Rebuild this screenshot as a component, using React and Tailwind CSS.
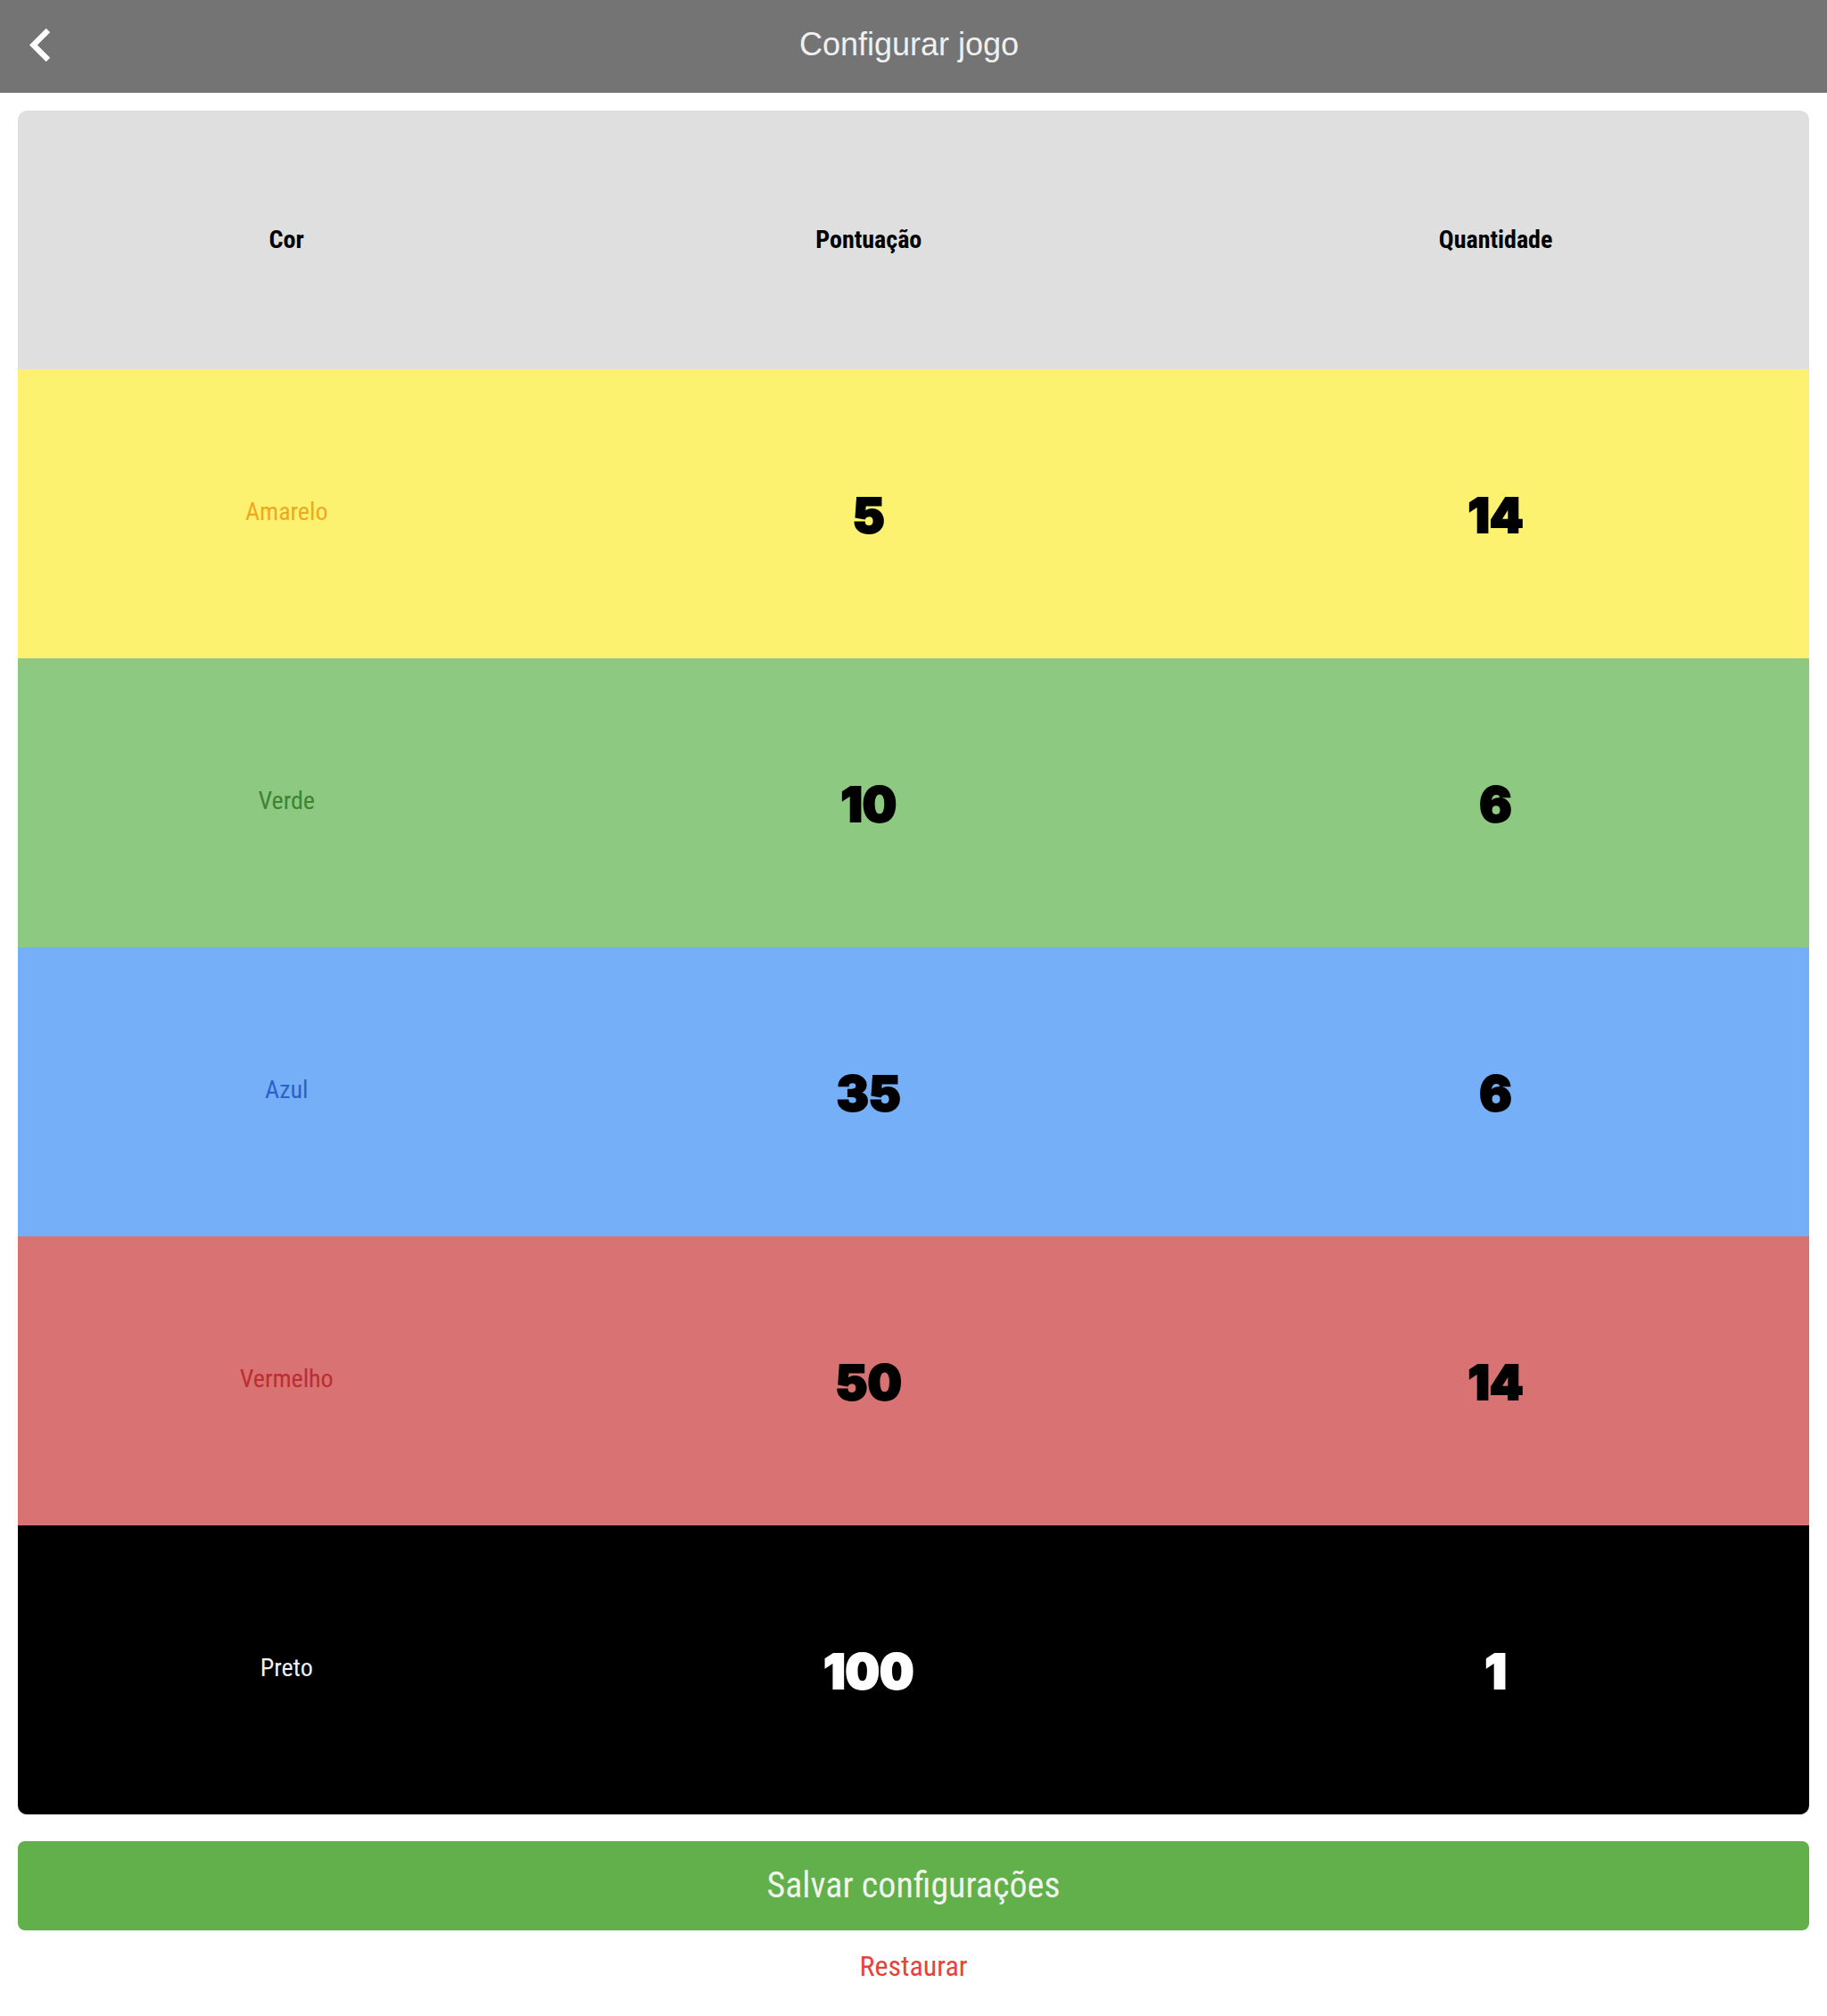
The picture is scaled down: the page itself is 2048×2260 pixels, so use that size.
import { MdChevronLeft } from "react-icons/md";

const rows = [
  { name: "Amarelo", points: 5, amount: 14, bg: "bg-[#fcf26f]", label: "text-[#f0a723]", value: "text-black" },
  { name: "Verde", points: 10, amount: 6, bg: "bg-[#8dc980]", label: "text-[#3f8232]", value: "text-black" },
  { name: "Azul", points: 35, amount: 6, bg: "bg-[#75aff7]", label: "text-[#2f5fc8]", value: "text-black" },
  { name: "Vermelho", points: 50, amount: 14, bg: "bg-[#d97272]", label: "text-[#bb2d31]", value: "text-black" },
  { name: "Preto", points: 100, amount: 1, bg: "bg-black", label: "text-[#f0f0f0]", value: "text-white" },
];

function ValueInput({ label, value, color }) {
  return (
    <input
      type="text"
      inputMode="numeric"
      aria-label={label}
      defaultValue={value}
      className={`block w-full bg-transparent pt-1 text-center font-['Inter',sans-serif] text-[54px] leading-[64px] font-black outline-none [-webkit-text-stroke:2px_currentColor] ${color}`}
    />
  );
}

export default function App() {
  return (
    <div className="flex min-h-screen flex-col bg-white font-['Roboto_Condensed','Roboto',sans-serif]">
      <header className="grid h-[104px] grid-cols-[84px_1fr_94px] items-center bg-[#747474] pb-1">
        <button type="button" aria-label="Voltar" className="pl-2 text-white">
          <MdChevronLeft size={75} />
        </button>
        <h1 className="text-center font-['Liberation_Sans',sans-serif] text-4xl text-[#f0f0f0]">Configurar jogo</h1>
      </header>

      <main className="flex flex-1 flex-col p-5">
        <div className="overflow-hidden rounded-[10px]">
          <table className="w-full table-fixed border-collapse text-center text-[28px] leading-9">
            <colgroup>
              <col className="w-[30%]" />
              <col className="w-[35%]" />
              <col className="w-[35%]" />
            </colgroup>
            <thead>
              <tr className="h-[290px] bg-[#dfdfdf] font-bold text-black">
                <th scope="col">Cor</th>
                <th scope="col">Pontuação</th>
                <th scope="col">Quantidade</th>
              </tr>
            </thead>
            <tbody>
              {rows.map((row) => (
                <tr key={row.name} className={`h-[324px] ${row.bg}`}>
                  <th scope="row" className={`pb-1 font-normal ${row.label}`}>{row.name}</th>
                  <td><ValueInput label={`Pontuação ${row.name}`} value={row.points} color={row.value} /></td>
                  <td><ValueInput label={`Quantidade ${row.name}`} value={row.amount} color={row.value} /></td>
                </tr>
              ))}
            </tbody>
          </table>
        </div>

        <button type="button" className="mt-[30px] h-[100px] w-full rounded-lg bg-[#62b04b] text-[40px] text-[#f0f5ee]">
          Salvar configurações
        </button>
        <button type="button" className="mt-5 self-center text-[32px] leading-10 text-[#e5443b]">
          Restaurar
        </button>
      </main>
    </div>
  );
}
